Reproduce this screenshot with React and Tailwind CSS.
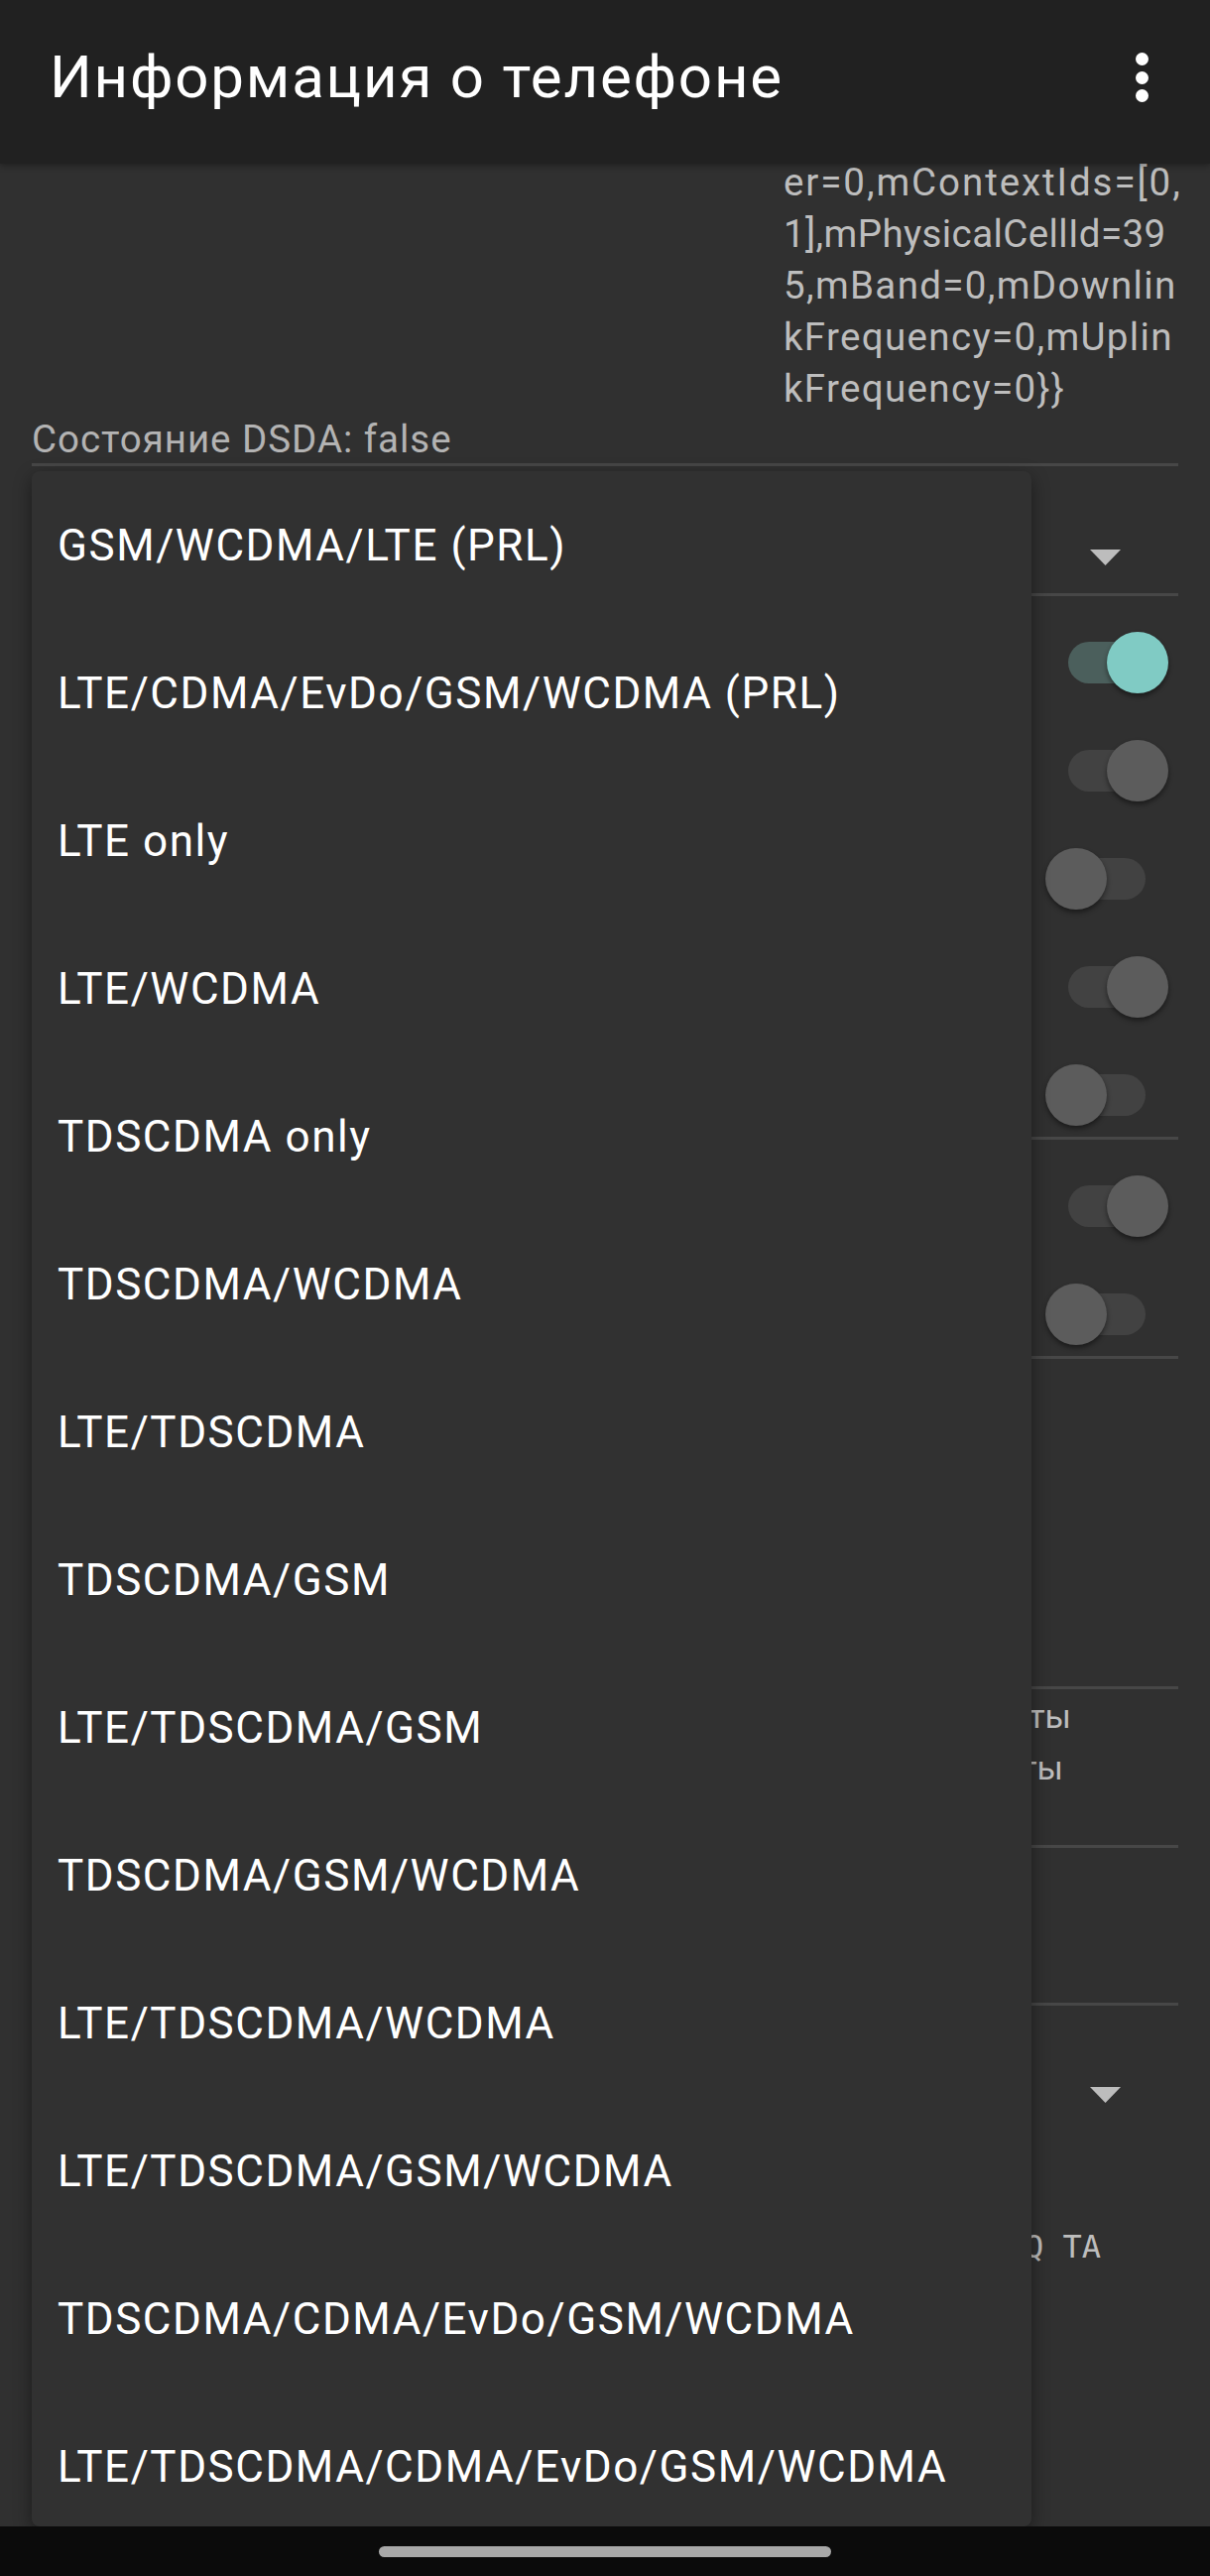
import React from 'react';

const MODES = [
  'GSM/WCDMA/LTE (PRL)',
  'LTE/CDMA/EvDo/GSM/WCDMA (PRL)',
  'LTE only',
  'LTE/WCDMA',
  'TDSCDMA only',
  'TDSCDMA/WCDMA',
  'LTE/TDSCDMA',
  'TDSCDMA/GSM',
  'LTE/TDSCDMA/GSM',
  'TDSCDMA/GSM/WCDMA',
  'LTE/TDSCDMA/WCDMA',
  'LTE/TDSCDMA/GSM/WCDMA',
  'TDSCDMA/CDMA/EvDo/GSM/WCDMA',
  'LTE/TDSCDMA/CDMA/EvDo/GSM/WCDMA',
];

// wrapped tail of the cell info value (letter spacing tuned per line)
const CELL_LINES = [
  ['er=0,mContextIds=[0,', 'tracking-[0.05em]'],
  ['1],mPhysicalCellId=39', 'tracking-[0.01em]'],
  ['5,mBand=0,mDownlin', 'tracking-[0.035em]'],
  ['kFrequency=0,mUplin', 'tracking-[0.035em]'],
  ['kFrequency=0}}', 'tracking-[0.035em]'],
];

function Divider() {
  return <div className="mx-[32px] h-[3px] bg-[#474747]" />;
}

function Arrow() {
  return (
    <svg width="31" height="16" viewBox="0 0 31 16">
      <polygon points="0,0 31,0 15.5,16" fill="#bdbdbd" />
    </svg>
  );
}

// state: 'on' (teal, right), 'right' (disabled, right), 'left' (off)
function SwitchRow({ state }) {
  const right = state !== 'left';
  return (
    <div className="h-[109px] pt-[36px] flex justify-end pr-[42px]">
      <div className="relative w-[124px] h-[62px]">
        <div
          className={`absolute left-[23px] top-[10px] w-[78px] h-[42px] rounded-full ${state === 'on' ? 'bg-[#4b5f5c]' : 'bg-[#424242]'}`}
        />
        <div
          className={`absolute top-0 w-[62px] h-[62px] rounded-full shadow-[0_3px_5px_rgba(0,0,0,0.45)] ${right ? 'left-[62px]' : 'left-0'} ${state === 'on' ? 'bg-[#80cbc4]' : 'bg-[#5c5c5c]'}`}
        />
      </div>
    </div>
  );
}

export default function App() {
  return (
    <div
      className="relative w-[1220px] h-[2597px] overflow-hidden bg-[#303030]"
      style={{ fontFamily: 'Roboto, "Noto Sans", sans-serif' }}
    >
      {/* toolbar */}
      <header className="relative z-10 h-[165px] bg-[#212121] flex items-center justify-between pl-[50px] pr-[62px] pb-[9px] shadow-[0_2px_6px_rgba(0,0,0,0.35)]">
        <h1 className="text-[60px] text-white leading-none tracking-[0.03em]">Информация о телефоне</h1>
        <div className="flex flex-col gap-[5.5px]">
          <span className="block w-[13px] h-[13px] rounded-full bg-white" />
          <span className="block w-[13px] h-[13px] rounded-full bg-white" />
          <span className="block w-[13px] h-[13px] rounded-full bg-white" />
        </div>
      </header>

      {/* page content, scrolled */}
      <main className="-mt-[7px] text-[#bdbdbd]">
        <div className="flex justify-end pr-[32px]">
          <div className="w-[398px] text-[38.5px] leading-[52px] whitespace-nowrap">
            {CELL_LINES.map(([l, t]) => <div key={l} className={t}>{l}</div>)}
          </div>
        </div>
        <div className="px-[32px] text-[38.5px] leading-[49px] tracking-[0.025em] text-[#b3b3b3]">Состояние DSDA: false</div>
        <Divider />

        <div className="h-[128px] mx-[32px] flex justify-end items-start pt-[84px] pr-[58px]">
          <Arrow />
        </div>
        <Divider />

        <SwitchRow state="on" />
        <SwitchRow state="right" />
        <SwitchRow state="left" />
        <SwitchRow state="right" />
        <SwitchRow state="left" />
        <Divider />

        <SwitchRow state="right" />
        <SwitchRow state="left" />
        <Divider />

        <div className="h-[330px]" />
        <Divider />

        <div className="h-[157px] pt-[1px] pl-[32px] text-[34px] leading-[52px]">
          <div className="w-[1048px] text-right">Показать параметры соты</div>
          <div className="w-[1040px] text-right">Обновить параметры соты</div>
        </div>
        <Divider />

        <div className="h-[156px]" />
        <Divider />

        <div className="mx-[32px] flex justify-end pt-[82px] pr-[58px]">
          <Arrow />
        </div>
        <div
          className="mt-[125px] pl-[32px] w-[1110px] text-right text-[32px] leading-[40px]"
          style={{ fontFamily: '"DejaVu Sans Mono", monospace' }}
        >
          RSRP RSRQ TA
        </div>
      </main>

      {/* network mode popup */}
      <div className="absolute left-[32px] top-[475px] w-[1008px] h-[2072px] overflow-hidden rounded-[8px] bg-[#313131] shadow-[0_6px_18px_rgba(0,0,0,0.45)]">
        {MODES.map(m => (
          <div key={m} className="h-[149px] flex items-center pl-[26px] text-[44px] tracking-[0.035em] text-white">
            {m}
          </div>
        ))}
      </div>

      {/* gesture bar */}
      <div className="absolute bottom-0 left-0 w-full h-[50px] bg-[#0b0b0b] flex items-center justify-center">
        <div className="w-[456px] h-[11px] rounded-full bg-[#a8a8a8]" />
      </div>
    </div>
  );
}
